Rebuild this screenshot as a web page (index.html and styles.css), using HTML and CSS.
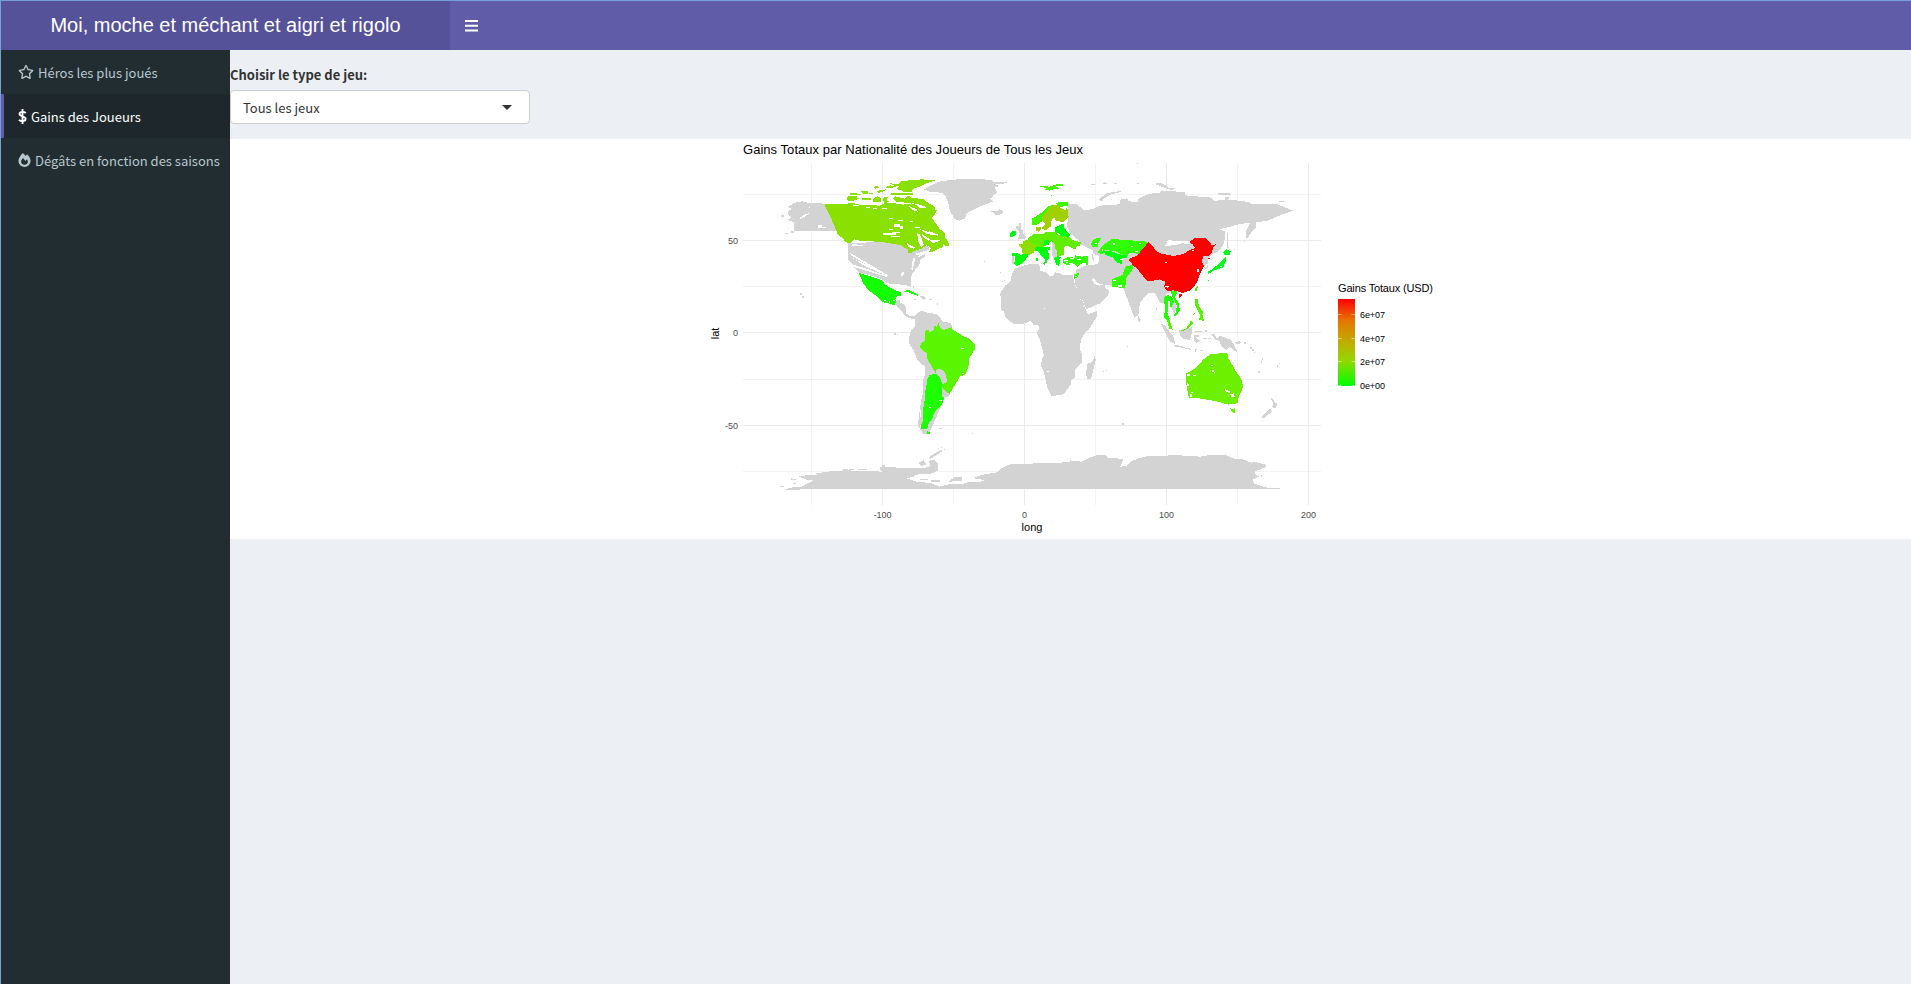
FILE: index.html
```html
<!DOCTYPE html>
<html lang="fr">
<head>
<meta charset="utf-8">
<title>Moi, moche et méchant et aigri et rigolo</title>
<link rel="stylesheet" href="styles.css">
</head>
<body>
<div class="app">
  <header class="header">
    <div class="logo">Moi, moche et méchant et aigri et rigolo</div>
    <nav class="navbar">
      <svg class="burger" viewBox="0 0 13 12"><path d="M0 1h13M0 5.8h13M0 10.6h13" stroke="#fff" stroke-width="2"/></svg>
    </nav>
  </header>
  <div class="body">
    <aside class="sidebar">
      <a class="item"><svg class="icon star" viewBox="0 0 576 512"><path fill="currentColor" d="M528 171l-146-21L317 18c-12-24-46-24-58 0l-65 132-146 21c-26 4-37 36-18 55l106 103-25 146c-4 26 24 46 47 34l130-69 131 69c23 12 51-8 47-34l-25-146 106-103c19-19 8-51-19-55zM389 312l23 138-124-65-124 65 24-138-101-98 139-20 62-126 62 126 139 20z"/></svg><span>Héros les plus joués</span></a>
      <a class="item active"><svg class="icon dollar" viewBox="0 0 9 16"><path d="M4.5 0v16M8 4.3C6.8 3.2 5.700 3 4.400 3 2.500 3 1.300 3.900 1.300 5.300c0 3.100 6.500 1.900 6.500 5.200 0 1.600-1.300 2.500-3.300 2.500-1.500 0-2.700-.4-3.900-1.400" fill="none" stroke="currentColor" stroke-width="2"/></svg><span>Gains des Joueurs</span></a>
      <a class="item"><svg class="icon fire" viewBox="0 0 13 15"><path fill="currentColor" fill-rule="evenodd" d="M4.700 0c1.300 1 2.300 2.100 3.100 3.200L9.300 1.400C11.300 3.200 13 6 13 8.500a6.500 6.500 0 0 1-13 0C0 6 2.200 2.400 4.700 0zM5 5.400C3.600 7 2.900 8 2.900 9.300c0 2 1.600 3.300 3.600 3.300s3.600-1.400 3.600-3.300c0-.9-.4-1.800-.9-2.700L7.500 8.600z"/></svg><span>Dégâts en fonction des saisons</span></a>
    </aside>
    <main class="content">
      <section class="filter">
        <label class="label">Choisir le type de jeu:</label>
        <div class="select"><span>Tous les jeux</span><i class="caret"></i></div>
      </section>
      <section class="plot">
<svg class="map" viewBox="230 139 1681 400" width="1681" height="400">
  <defs><linearGradient id="scale" x1="0" y1="1" x2="0" y2="0"><stop offset="0" stop-color="#0f0"/><stop offset=".3" stop-color="#96d600"/><stop offset=".5" stop-color="#bfae00"/><stop offset=".75" stop-color="#e67600"/><stop offset="1" stop-color="#f00"/></linearGradient></defs>
  <g class="minor"><path d="M811.5 163V505M953.500 163V505M1095.500 163V505M1237.500 163V505M743 194.500H1321M743 286.500H1321M743 379.500H1321M743 471.500H1321"/></g>
  <g class="major"><path d="M882.500 163V505M1024.500 163V505M1166.500 163V505M1308.500 163V505M743 240.500H1321M743 332.500H1321M743 425.500H1321"/></g>
  <g class="land">
    <!-- Alaska, USA, Canada -->
    <g transform="translate(780 170) scale(.33333)">
      <path d="M30 106 45 98 66 94 82 98 133 101 160 155 180 183 42 183 42 157 30 153 24 148 34 143 24 134 24 124 34 117 24 110zM3 135h9v5H3zM15 192h9v-4h-9zM33 184h9v4h-9z"/>
      <path d="M204 217 224 220 305 214 360 222 390 240 445 226 447 240 432 244 420 248 414 262 437 252 434 260 420 272 418 285 408 294 400 308 395 312 392 350 375 345 322 340 310 330 300 325 255 312 236 308 222 292 212 275 204 268zM60 370h6v6h-6zM67 377h6v6h-6zM398 348h5v5h-5zM398 362h4v3h-4zM418 380 428 377 440 385 430 388z"/>
      <path fill="#8ae000" d="M133 102 200 102 215 98 240 104 300 107 318 98 345 100 370 104 395 100 412 106 420 115 440 112 447 120 470 121 464 133 455 143 462 153 480 178 496 190 496 202 503 213 508 226 498 229 490 220 487 232 474 237 455 247 447 244 454 234 440 226 425 236 412 240 397 245 395 250 383 250 383 238 360 225 305 216 240 212 224 208 212 220 195 216 188 204 174 195 168 180 158 156z"/>
      <path fill="#8ae000" d="M200 88 204 78 232 77 230 84 240 84 222 92 205 93zM210 68h22v4h12v4h-34zM242 64 265 63 262 74 248 70zM245 84h28v6h-28zM268 68h10v4h-10zM283 50 294 46 296 53 284 57zM278 94 282 84 293 79 304 85 302 97 285 97zM288 63 318 58 313 63 295 70zM308 84 325 79 320 90 330 97 312 98zM314 52 332 46 349 50 335 54zM329 40 355 42 365 33 425 28 467 31 440 40 420 50 400 56 395 65 374 67 363 60 350 58 358 49 340 46zM333 69h65v5h-65zM338 85 347 79 374 86 385 77 395 83 430 88 447 100 465 111 466 118 450 122 435 110 415 103 390 98 350 97zM430 128 452 140 458 149 440 142zM174 184h7v12h-8z"/>
      <path class="hole" d="M219 106h17v3h-17zM258 110h11v4h-11zM278 113h14v3h-14zM307 113h15v3h-15zM327 144h13v3h-13zM354 149h14v4h-14zM341 163h19v4h9v10h-8v-6h-20zM328 176h12v3h-12zM310 189h27v-3h24v4h-14v4h-37zM333 198h27v3h-27zM387 108 410 118 413 125 395 119zM411 190 420 193 432 225 424 230 416 220zM425 191 450 208 447 213 430 202zM420 178 468 192 467 196 440 192zM440 181 476 194 472 197zM380 219 404 232 401 236 386 231zM390 152h10v3h-10zM405 172h15v3h-15zM450 211 484 210 460 220zM215 223h15v3h18v3h-33zM210 248 235 263 308 306 302 310 212 255zM211 260 225 268 325 315 311 313 250 286zM216 283 250 293 295 309 325 317 320 321 218 290zM362 309 373 305 373 316 362 318zM394 297 399 265 405 263 403 279 398 300zM407 250h18v4h-18zM58 144 74 134 89 129 87 132 61 147zM115 166h12v4h12v4h-24zM86 110h4v4h-4z"/>
    </g>
    <!-- Americas south of the US -->
    <g transform="translate(840 250) scale(.33333)">
      <path d="M163 163 171 150 180 149 180 158 196 165 198 190 209 198 222 199 234 187 246 183 270 190 288 191 300 203 309 215 333 219 338 240 330 300 330 435 325 440 306 442 305 465 270 545 265 552 247 547 233 528 238 490 243 455 249 430 250 390 255 372 255 350 232 330 220 300 207 280 207 265 213 242 225 230 226 208 212 205 198 201 190 190 178 177zM240 140 262 144 250 149zM267 146h8v3h-8zM222 147h6v3h-6zM291 159h4v6h-4zM163 249h4v5h-4zM171 252h4v3h-4zM297 534h9v3h-9zM396 548h3v4h-3z"/>
      <path class="hole" d="M243 465 240 495 239 515 244 490zM241 525 247 540 241 535z"/>
      <path fill="#14ff00" d="M55 68 78 75 125 90 135 103 150 113 164 120 182 127 182 138 170 139 166 148 168 158 163 166 150 161 130 157 105 135 85 120 70 100zM192 125 204 119 216 125 235 134 235 138 218 132 205 127z"/>
      <path class="hole" d="M133 150h6v4h-6zM148 153h3v5h-3zM160 150h4v4h-4z"/>
      <path fill="#5af500" d="M283 228 290 231 295 219 301 234 312 240 333 233 333 224 337 239 370 258 385 265 405 282 405 297 388 325 386 345 378 372 360 380 345 405 328 432 318 425 306 410 309 395 300 385 287 370 275 350 262 325 260 310 243 297 240 288 246 277 256 272 256 242 264 239 269 246 280 242z"/>
      <path d="M288 360 297 356 312 363 318 375 322 395 311 402 306 400 300 382 288 375z"/>
      <path fill="#1eff00" d="M268 375 290 371 300 382 306 400 306 440 312 443 308 460 297 472 285 485 275 510 266 520 262 537 243 537 243 525 250 510 249 480 255 445 257 412 262 400 262 387zM262 543 272 550 262 552z"/>
      <path class="hole" d="M363 293h9v4h-9zM366 370h6v3h-6zM297 449h8v3h-8zM267 470h6v4h-6z"/>
    </g>
    <!-- Africa -->
    <g transform="translate(960 250) scale(.33333)">
      <path d="M165 55 205 43 238 42 240 62 255 66 267 77 279 79 284 67 300 70 310 75 338 75 345 105 365 145 378 180 385 192 410 184 410 200 395 225 385 240 375 248 362 272 360 300 366 310 366 338 345 357 344 385 335 388 332 405 310 433 289 436 275 440 270 428 262 412 257 390 252 367 243 348 246 325 252 317 248 300 240 270 232 255 232 245 237 240 235 224 220 224 212 212 192 221 160 222 144 208 135 198 132 184 123 180 124 150 120 130 135 108 152 92 155 75zM405 315 407 330 400 360 393 387 382 388 378 370 382 342 397 335zM73 33h3v3h-3zM121 66h3v3h-3zM126 93h4v3h-4zM132 90h3v3h-3zM429 362h4v4h-4zM437 360h3v3h-3zM501 288h3v3h-3z"/>
      <path class="hole" d="M252 173h4v4h-4zM260 363h7v4h-7z"/>
    </g>
    <!-- Greenland, Europe, Asia -->
    <g transform="translate(960 130) scale(.33333)">
      <path d="M0 272-15 268-30 245-35 220-45 195-55 188-90 186-108 178-75 160-60 154 0 147 70 148 98 152 100 157 143 156 132 161 108 163 118 168 105 172 112 188 98 195 100 200 90 205 100 214 80 222 55 232 20 250 15 265zM92 244 112 242 118 238 133 246 120 254 105 256 103 250zM165 290 177 288 178 280 183 280 182 294 188 300 191 315 199 319 195 328 172 328 180 310zM155 380 163 378 163 403 156 400z"/>
      <path d="M322 222 350 223 372 240 395 238 420 227 480 223 482 208 500 205 507 214 535 217 533 207 560 195 585 188 600 188 605 182 675 186 675 196 720 200 755 203 762 213 800 208 860 215 880 223 950 222 1000 242 970 252 920 273 840 282 780 298 795 305 793 340 775 365 760 370 745 385 744 415 735 418 728 400 700 470 620 490 615 500 612 520 600 518 585 488 565 488 540 518 535 555 523 563 505 515 490 475 485 475 455 468 430 462 413 460 400 442 395 450 405 463 420 467 436 461 436 474 447 480 444 498 420 520 380 538 372 520 355 485 345 460 348 420 380 405 405 405 395 380 400 362 365 345 355 330 330 310 320 290 325 265z"/>
      <path d="M414 210 430 197 440 190 485 182 480 187 448 195 427 210 430 215zM424 160 433 157 445 162zM394 162h12v3h-12zM461 159h10v3h-10zM530 159h8v3h-8zM582 162 600 158 622 168 620 172 645 175 635 180 600 168zM772 189 808 189 812 194 840 193 778 195zM795 200h12v8h-12zM957 214h15v3h-15zM857 320 858 302 870 280 888 274 888 291 872 310 862 326zM800 308h3v38l4 8-7 0zM530 100h4v3h-4zM822 357h4v3h-4zM852 333h3v3h-3z"/>
      <path class="hole" d="M618 340 625 330 645 333 690 333 691 342 665 340 650 345 615 348zM395 365 405 375 418 377 415 402 401 404 403 390zM340 460 349 480 375 540 367 520z"/>
      <path fill="#42f700" d="M217 286 217 265 240 252 265 228 290 224 287 218 323 216 323 228 290 232 262 243 250 270 235 283zM240 170 248 167 268 170 290 163 308 162 308 167 285 170 300 175 280 178 270 182 255 180 258 174zM273 195h3v3h-3z"/>
      <path fill="#a0d000" d="M245 262 262 243 275 228 290 224 300 232 316 240 322 232 326 262 310 275 289 274 282 262 275 270 272 290 258 300 245 296 255 282 247 272zM228 292 240 290 245 298 237 306 229 303z"/>
      <path fill="#00ff0c" d="M285 292 310 280 312 292 332 318 310 325 295 310 285 305zM150 310 157 304 167 303 167 315 152 323zM155 368 172 368 180 374 203 372 204 380 185 402 170 408 163 400 167 380 155 376zM222 352 235 347 255 350 272 353 268 360 252 355 260 376 269 385 262 392 258 404 255 388 240 372 232 364 224 362zM228 383h6v9h-6zM246 398 258 397 254 404zM282 384 290 378 305 382 298 388 301 396 296 408 287 402z"/>
      <path fill="#61ed00" d="M205 325 220 312 250 312 258 305 288 305 296 315 330 322 336 330 363 337 360 347 348 351 350 358 335 355 325 347 312 350 312 375 292 378 290 362 283 358 285 344 275 334 252 350 222 350 205 335z"/>
      <path fill="#8edc00" d="M175 342 188 342 190 334 205 328 215 340 228 348 222 368 208 374 187 370 185 355z"/>
      <path fill="#30ff00" d="M310 388 325 380 345 384 345 376 365 380 383 378 383 404 360 402 353 410 340 401 322 406 310 400zM341 432 355 430 360 424 352 443 342 446zM412 367 430 345 455 327 540 333 560 335 563 343 545 373 510 368 500 380 470 365 435 360 428 373zM393 340 403 326 423 324 415 340 413 352 397 350zM457 470 457 448 475 440 488 435 496 410 518 405 520 412 510 430 500 440 495 475 475 472z"/>
      <path fill="#00ff0c" d="M432 362 450 362 470 370 500 378 500 385 485 385 485 402 470 397 458 382 435 375z"/>
      <path fill="#00ff0c" d="M225 353h35l8 25-10 8-20-18zM255 330 272 332 265 345 250 345z"/>
      <path d="M275 336 286 342 285 356 290 362 292 378 282 385 276 375z"/>
      <path class="hole" d="M313 390h12v4h-12zM330 384h11v4h-11zM352 387h10v4h-10zM327 399h12v4h-12zM367 400h12v3h-12zM318 395h7v4h-7zM514 347h5v4h-5zM525 362h10v4h-10zM425 358h5v4h-5zM460 340h4v4h-4zM404 340h8v3h-8zM480 386h8v3h-8zM473 466h12v4h-12zM460 450h7v4h-7zM346 438h5v4h-5zM342 328h4v4h-4z"/>
    </g>
    <!-- China, Japan -->
    <g transform="translate(1130 150) scale(.33333)">
      <path fill="red" d="M-3 330 0 324 20 318 55 277 70 290 75 300 90 310 130 318 160 312 180 300 195 294 188 283 178 276 195 264 225 264 240 277 245 285 257 283 250 293 245 310 235 318 220 318 215 335 222 347 210 372 202 395 190 413 180 422 160 428 148 427 140 423 130 421 110 425 103 410 105 395 90 388 70 392 50 392 25 360 8 345zM148 433 156 430 154 440 148 444zM235 325h4v3h-4z"/>
      <path fill="#00ff1a" d="M280 307 290 298 303 304 298 315 282 316zM287 320 288 333 279 353 255 360 235 372 233 366 243 360 265 343zM234 389h3v4h-3z"/>
      <path fill="#46fa00" d="M196 413 203 408 199 423 195 421zM198 447h5v4h-5z"/>
      <path class="hole" d="M201 357h6v9h-6zM104 336h6v4h-6zM186 300h5v3h-5zM270 348h6v3h-6zM28 280h5v3h-5zM109 412 117 408 114 414zM105 408h12v3h-12zM222 350 232 340 234 343 226 355z"/>
    </g>
    <!-- South-East Asia, Oceania -->
    <g transform="translate(1100 270) scale(.33333)">
      <path d="M115 138 122 147 121 155 114 154zM182 160 193 165 205 180 222 202 225 222 210 214 198 192zM223 224 245 228 260 234 275 236 273 240 240 232 223 229zM237 181 275 172 276 185 270 210 250 207 241 198zM282 195 298 194 296 200 288 203 300 212 290 218 282 212zM334 193 343 192 350 205 360 198 390 208 400 222 410 240 412 246 400 240 388 230 380 240 365 230 358 213 345 208zM405 217 420 213 424 219 410 224zM450 232h5v5h-5zM456 238h5v6h-5zM462 245h4v4h-4zM433 217h5v4h-5zM512 384 520 388 523 397 533 399 526 416 517 412 519 400zM511 416 515 425 500 438 493 446 484 444 488 437zM486 264h3v6h-3zM484 273h3v6h-3zM537 279h3v4h-3zM531 286h4v5h-4zM474 302h5v6h-5zM285 236h5v3h-5zM284 241h4v4h-4zM300 240h9v3h-9zM285 182h20v4h-20zM314 181h7v4h-7zM310 205h10v3h-10zM324 204h9v4h-9zM312 164h3v4h-3zM330 213h3v3h-3zM67 458h5v6h-5zM81 228h3v3h-3zM18 300h3v3h-3zM9 303h3v3h-3zM168 114h4v6h-4zM216 80 225 95 230 120 222 130 213 110z"/>
      <path d="M178 45 200 60 195 85 190 100 178 95z"/>
      <path fill="#1eff00" d="M211 62 232 62 230 72 224 80 236 100 240 120 230 135 219 140 229 125 230 105 219 85zM192 82 203 75 217 82 222 96 218 102 216 112 205 110 202 128 210 148 200 150 192 142 195 118z"/>
      <path class="hole" d="M204 92h7v18h-7z"/>
      <path fill="#50f500" d="M201 148 208 150 214 166 218 179 208 176 203 160zM240 182 255 178 268 163 272 151 281 158 262 177 250 183zM276 136 285 128 283 134zM285 88 294 87 296 108 305 120 310 125 307 133 312 154 296 148 302 138 297 128 286 108zM286 62 291 47 295 49 289 63z"/>
      <path fill="#6cf000" d="M332 252 380 249 385 257 384 263 410 308 423 325 429 348 424 365 417 378 412 400 385 404 350 394 315 388 285 383 268 384 264 375 261 350 257 333 259 310 275 303 290 290 305 275 308 270zM390 414 397 417 405 415 404 429 396 427z"/>
      <path class="hole" d="M333 285h6v4h-6zM336 299 343 301 344 309 337 305zM280 315h8v4h-8zM262 313h7v5h-7zM261 340 269 341 266 348 261 347zM269 372h7v9h-7zM274 365h6v4h-6zM376 358 390 365 390 369 377 365zM390 374 402 370 404 382 396 382z"/>
    </g>
    <!-- Antarctica -->
    <g transform="matrix(.40816 0 0 .33333 700 430)">
      <path d="M211 177 228 172 250 170 260 162 280 152 262 150 242 139 260 136 288 136 285 130 320 124 355 121 410 123 447 125 438 113 460 110 490 114 525 115 560 112 565 105 560 92 575 90 583 100 583 122 570 130 530 134 525 140 505 145 530 155 565 159 587 170 610 163 640 163 655 157 690 155 680 152 712 151 675 147 670 143 690 135 728 127 742 112 760 103 800 101 865 99 908 96 905 91 935 95 955 83 975 75 993 76 1000 83 1037 87 1030 110 1045 108 1055 95 1075 85 1095 79 1145 78 1150 75 1175 76 1225 80 1250 75 1290 76 1305 85 1330 88 1350 98 1362 96 1388 105 1385 112 1360 124 1360 132 1370 140 1355 148 1357 160 1375 168 1395 174 1421 175 1421 177 245 177 243 180 211 180zM195 168h11v3h-11zM222 145 240 148 225 150zM229 159h6v3h-6zM610 155 622 142 643 142 643 153zM540 147h18v3h-18zM565 151h23v5h-23zM535 98 548 91 555 104 542 108zM560 84 573 70 590 60 595 63 580 74 565 87zM582 54h4v3h-4zM590 51h3v3h-3zM597 57h3v3h-3zM350 116h12v3h-12zM447 105h6v5h-6zM366 118h12v2h-12zM386 117h22v3h-22zM1374 134h4v7h-4zM540 0h15l0 13-7 0zM666 9h3v3h-3z"/>
      <path fill="#1eff00" d="M556 3 566 10 556 12z"/>
    </g>
  </g>
  <text class="title" x="743" y="154" textLength="340">Gains Totaux par Nationalité des Joueurs de Tous les Jeux</text>
  <g class="tick" text-anchor="middle"><text x="882.500" y="518">-100</text><text x="1024.500" y="518">0</text><text x="1166.500" y="518">100</text><text x="1308.500" y="518">200</text></g>
  <g class="tick" text-anchor="end"><text x="738" y="243.500">50</text><text x="738" y="336">0</text><text x="738" y="429">-50</text></g>
  <text class="axis" x="1032" y="531" text-anchor="middle">long</text>
  <text class="axis" transform="translate(719 333.500) rotate(-90)" text-anchor="middle">lat</text>
  <text class="axis" x="1338" y="292" textLength="95">Gains Totaux (USD)</text>
  <rect x="1338" y="299" width="17" height="87" fill="url(#scale)"/>
  <path d="M1338 314.500h3.500m10 0h3.500M1338 338.500h3.500m10 0h3.500M1338 361.500h3.500m10 0h3.500M1338 385.500h3.500m10 0h3.500" stroke="#fff" stroke-opacity=".5"/>
  <g class="key"><text x="1360" y="318" textLength="25">6e+07</text><text x="1360" y="342" textLength="25">4e+07</text><text x="1360" y="365" textLength="25">2e+07</text><text x="1360" y="389" textLength="25">0e+00</text></g>
</svg>
      </section>
    </main>
  </div>
</div>
</body>
</html>
```
FILE: styles.css
```css
* { box-sizing: border-box; }
body { margin: 0; background: #ecf0f5; font-family: "Noto Sans CJK SC", "Noto Sans", sans-serif; font-size: 13px; color: #333; overflow: hidden; }
.app { height: 984px; display: flex; flex-direction: column; border-top: 1px solid #78a0d8; border-left: 1px solid #78a0d8; }
.header { display: flex; height: 49px; flex: none; color: #fff; }
.logo { width: 449px; background: #555299; font: 20px/48px "Liberation Sans", Arial, sans-serif; text-align: center; }
.navbar { flex: 1; background: #605ca8; display: flex; align-items: center; padding: 0 15px; }
.burger { width: 13px; height: 12px; }
.body { display: flex; flex: 1; }
.sidebar { width: 229px; background: #222d32; flex: none; }
.item { display: flex; align-items: center; gap: 4px; height: 44px; padding-left: 14px; border-left: 3px solid transparent; color: #b8c7ce; white-space: nowrap; }
.item.active { background: #1e282c; border-left-color: #605ca8; color: #fff; }
.icon { flex: none; height: 14px; }
.star { width: 16px; }
.dollar { width: 9px; height: 15px; }
.fire { width: 13px; }
.content { flex: 1; min-width: 0; }
.filter { height: 89px; padding-top: 15px; }
.label { display: block; height: 25px; line-height: 20px; font-weight: 700; }
.select { width: 300px; height: 34px; display: flex; align-items: center; justify-content: space-between; padding: 0 17px 0 12px; background: #fff; border: 1px solid #ccc; border-radius: 4px; }
.caret { border: 5px solid transparent; border-top-color: #333; border-bottom: 0; }
.plot { height: 400px; background: #fff; }
.map { display: block; font-family: "Liberation Sans", Arial, sans-serif; }
.minor { stroke: #f3f3f3; stroke-width: 1; }
.major { stroke: #ebebeb; stroke-width: 1; }
.land { fill: #d3d3d3; shape-rendering: crispEdges; }
.hole { fill: #fff; }
.title { font-size: 13px; fill: #000; }
.axis { font-size: 11px; fill: #000; }
.tick { font-size: 9px; fill: #4d4d4d; }
.key { font-size: 9px; fill: #000; }
```
